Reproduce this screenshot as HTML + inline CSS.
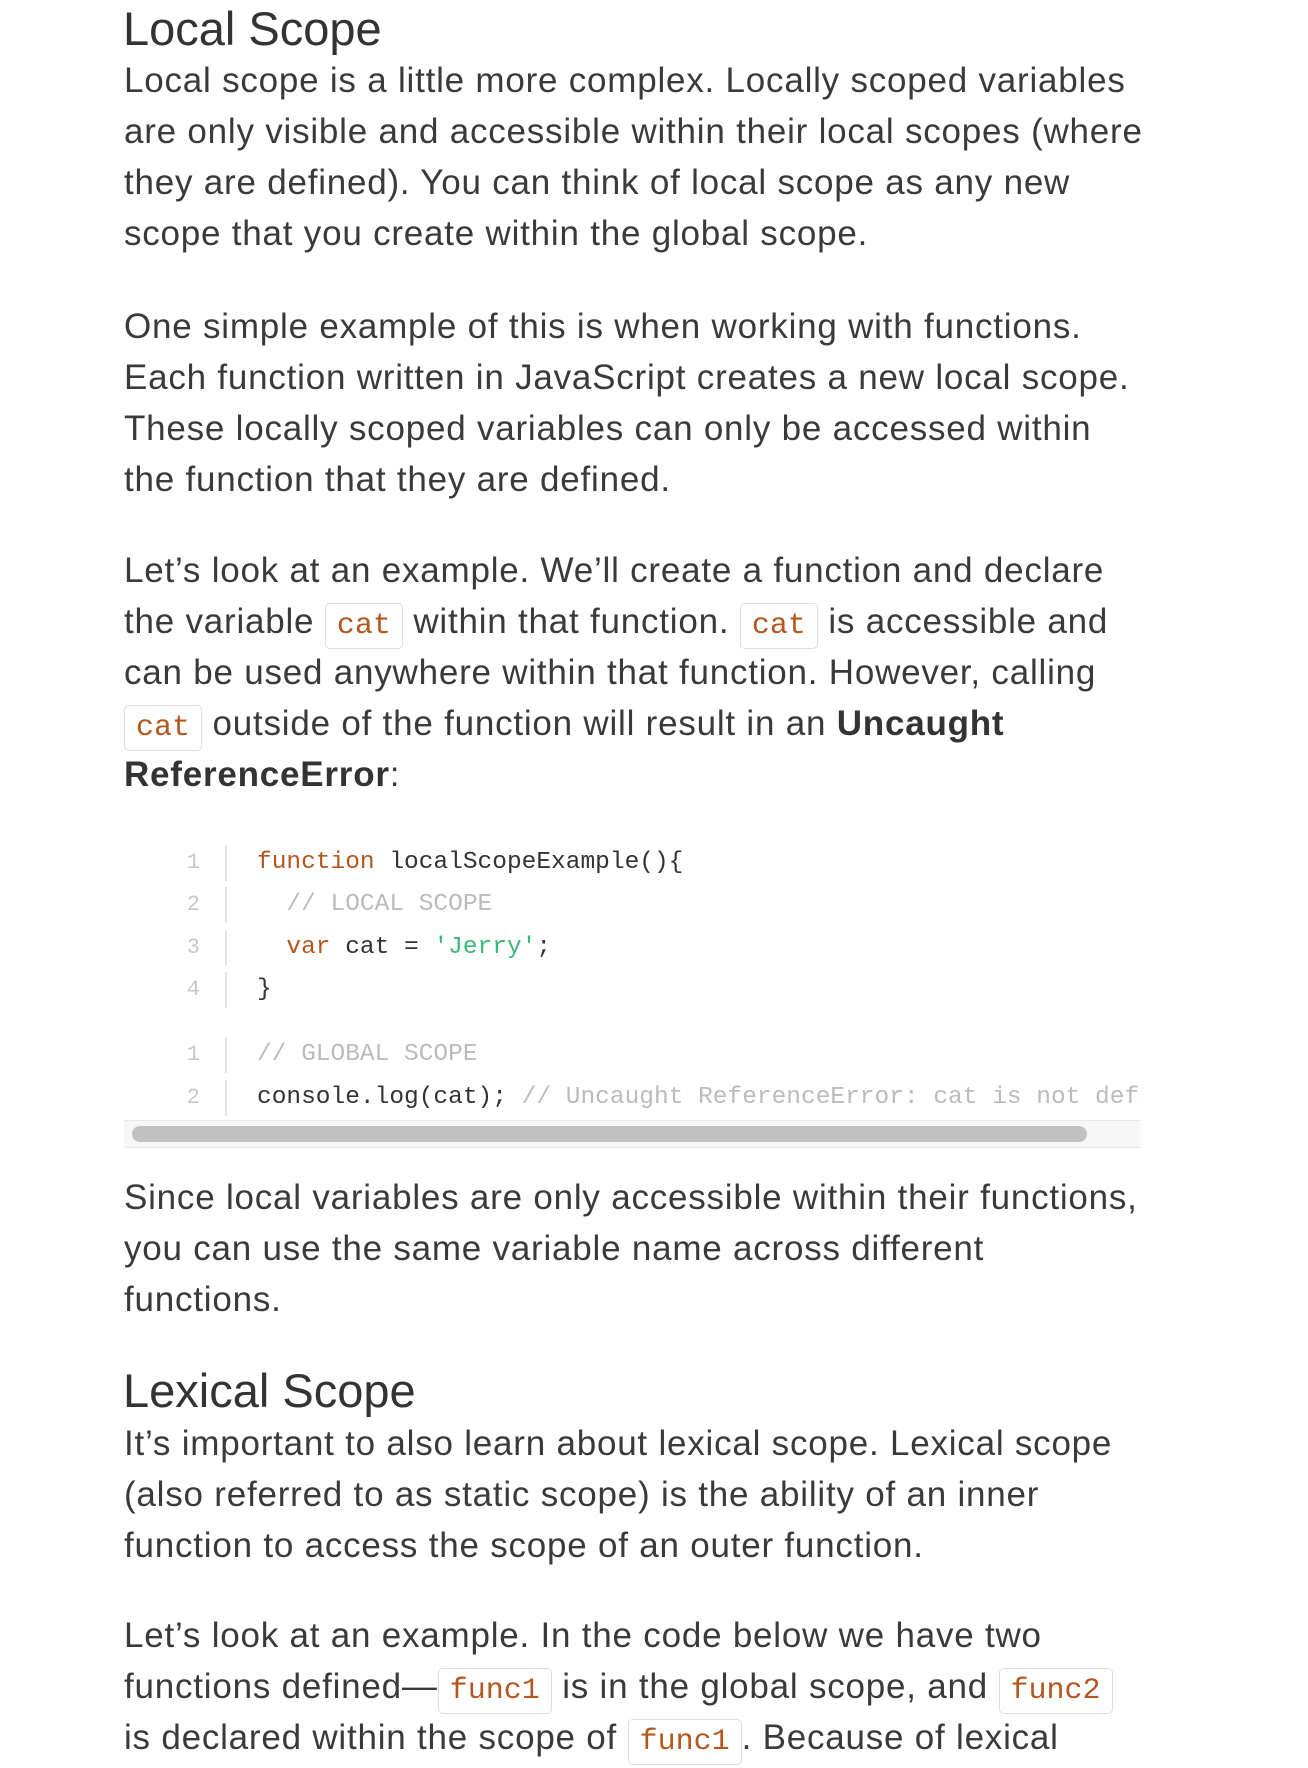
<!DOCTYPE html>
<html><head><meta charset="utf-8">
<style>
html,body{margin:0;padding:0;background:#fff;}
body{width:1308px;height:1706px;position:relative;overflow:hidden;font-family:"Liberation Sans",Arial,sans-serif;color:#3a3a3a;}
.l{position:absolute;left:124px;height:51px;line-height:51px;font-size:35px;letter-spacing:0.78px;white-space:nowrap;}
.h{position:absolute;left:123px;height:56px;line-height:56px;font-size:47px;white-space:nowrap;color:#333;}
code{font-family:"Liberation Mono",monospace;font-size:30px;letter-spacing:0;color:#b4571f;border:1px solid #dedede;border-radius:5px;padding:5px 11px;background:#fff;}
b{font-weight:bold;color:#333;}
.c{position:absolute;height:42px;line-height:42px;font-family:"Liberation Mono",monospace;font-size:24.5px;white-space:pre;color:#333;}
.n{position:absolute;left:178px;width:22px;text-align:right;height:42px;line-height:42px;font-family:"Liberation Mono",monospace;font-size:22px;color:#c8c8c8;}
.g{position:absolute;left:225px;width:2px;height:36px;background:#e3e3e3;}
.k{color:#b4571f;}.s{color:#3cb878;}.cm{color:#bbb;}
</style></head><body>
<div class="h" style="top:1px">Local Scope</div>
<div class="l" style="top:55px">Local scope is a little more complex. Locally scoped variables</div>
<div class="l" style="top:106px">are only visible and accessible within their local scopes (where</div>
<div class="l" style="top:157px">they are defined). You can think of local scope as any new</div>
<div class="l" style="top:208px">scope that you create within the global scope.</div>

<div class="l" style="top:301px">One simple example of this is when working with functions.</div>
<div class="l" style="top:352px">Each function written in JavaScript creates a new local scope.</div>
<div class="l" style="top:403px">These locally scoped variables can only be accessed within</div>
<div class="l" style="top:454px">the function that they are defined.</div>

<div class="l" style="top:545px">Let’s look at an example. We’ll create a function and declare</div>
<div class="l" style="top:596px">the variable <code>cat</code> within that function. <code>cat</code> is accessible and</div>
<div class="l" style="top:647px">can be used anywhere within that function. However, calling</div>
<div class="l" style="top:698px"><code>cat</code> outside of the function will result in an <b>Uncaught</b></div>
<div class="l" style="top:749px"><b>ReferenceError</b>:</div>

<div class="n" style="top:842px">1</div><div class="g" style="top:845px"></div>
<div class="c" style="top:842px;left:257px"><span class="k">function</span> localScopeExample(){</div>
<div class="n" style="top:884px">2</div><div class="g" style="top:887px"></div>
<div class="c" style="top:884px;left:257px">  <span class="cm">// LOCAL SCOPE</span></div>
<div class="n" style="top:927px">3</div><div class="g" style="top:930px"></div>
<div class="c" style="top:927px;left:257px">  <span class="k">var</span> cat = <span class="s">'Jerry'</span>;</div>
<div class="n" style="top:969px">4</div><div class="g" style="top:972px"></div>
<div class="c" style="top:969px;left:257px">}</div>

<div class="n" style="top:1034px">1</div><div class="g" style="top:1037px"></div>
<div class="c" style="top:1034px;left:257px"><span class="cm">// GLOBAL SCOPE</span></div>
<div class="n" style="top:1077px">2</div><div class="g" style="top:1080px"></div>
<div style="position:absolute;left:257px;top:1077px;width:884px;overflow:hidden;height:42px"><div class="c" style="top:0;left:0">console.log(cat); <span class="cm">// Uncaught ReferenceError: cat is not defined</span></div></div>

<div style="position:absolute;left:124px;top:1120px;width:1017px;height:28px;background:#f7f7f7;border-top:1px solid #e8e8e8;border-bottom:1px solid #e8e8e8;box-sizing:border-box"></div>
<div style="position:absolute;left:132px;top:1126px;width:955px;height:16px;border-radius:8px;background:#c1c1c1"></div>

<div class="l" style="top:1172px">Since local variables are only accessible within their functions,</div>
<div class="l" style="top:1223px">you can use the same variable name across different</div>
<div class="l" style="top:1274px">functions.</div>

<div class="h" style="top:1363px">Lexical Scope</div>
<div class="l" style="top:1418px">It’s important to also learn about lexical scope. Lexical scope</div>
<div class="l" style="top:1469px">(also referred to as static scope) is the ability of an inner</div>
<div class="l" style="top:1520px">function to access the scope of an outer function.</div>

<div class="l" style="top:1610px">Let’s look at an example. In the code below we have two</div>
<div class="l" style="top:1661px">functions defined—<code>func1</code> is in the global scope, and <code>func2</code></div>
<div class="l" style="top:1712px">is declared within the scope of <code>func1</code>. Because of lexical</div>
</body></html>
